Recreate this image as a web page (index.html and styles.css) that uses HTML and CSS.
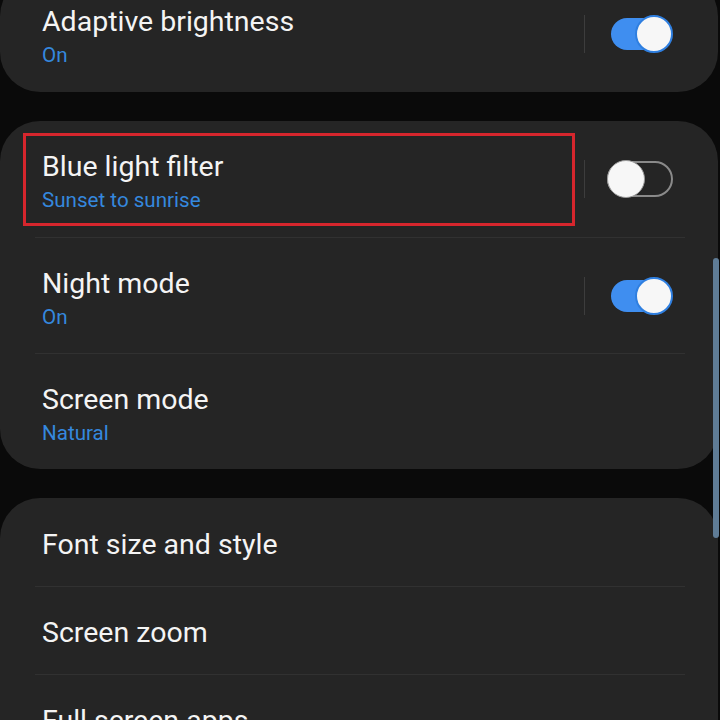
FILE: index.html
```html
<!DOCTYPE html>
<html lang="en">
<head>
  <meta charset="UTF-8">
  <meta name="viewport" content="width=device-width, initial-scale=1.0">
  <title>Display</title>
  <link rel="stylesheet" href="styles.css">
</head>
<body>
  <div class="screen">
    <section class="group">
      <div class="row">
        <div class="row-text">
          <div class="row-title">Adaptive brightness</div>
          <div class="row-summary">On</div>
        </div>
        <div class="row-switch">
          <span class="switch-divider"></span>
          <span class="switch on"><span class="thumb"></span></span>
        </div>
      </div>
    </section>

    <section class="group">
      <div class="row">
        <span class="highlight"></span>
        <div class="row-text">
          <div class="row-title">Blue light filter</div>
          <div class="row-summary">Sunset to sunrise</div>
        </div>
        <div class="row-switch">
          <span class="switch-divider"></span>
          <span class="switch"><span class="thumb"></span></span>
        </div>
      </div>
      <div class="row">
        <div class="row-text">
          <div class="row-title">Night mode</div>
          <div class="row-summary">On</div>
        </div>
        <div class="row-switch">
          <span class="switch-divider"></span>
          <span class="switch on"><span class="thumb"></span></span>
        </div>
      </div>
      <div class="row">
        <div class="row-text">
          <div class="row-title">Screen mode</div>
          <div class="row-summary">Natural</div>
        </div>
      </div>
    </section>

    <section class="group">
      <div class="row short">
        <div class="row-text">
          <div class="row-title">Font size and style</div>
        </div>
      </div>
      <div class="row short">
        <div class="row-text">
          <div class="row-title">Screen zoom</div>
        </div>
      </div>
      <div class="row short">
        <div class="row-text">
          <div class="row-title">Full screen apps</div>
        </div>
      </div>
    </section>

    <div class="scrollbar"></div>
  </div>
</body>
</html>
```

FILE: styles.css
```css
:root {
  --bg: #0a0a0a;
  --card: #252525;
  --line: #313131;
  --text: #f4f4f4;
  --accent: #3588de;
  --switch-on: #3f8ef0;
}

* {
  margin: 0;
  padding: 0;
  box-sizing: border-box;
}

html, body {
  background: var(--bg);
  height: 100%;
  overflow: hidden;
}

body {
  font-family: Roboto, "Noto Sans", sans-serif;
  color: var(--text);
}

.screen {
  position: relative;
  width: 720px;
  height: 744px;
  margin-top: -24px;
  display: flex;
  flex-direction: column;
  gap: 29px;
}

.group {
  background: var(--card);
  border-radius: 40px;
  margin-right: 2px;
  flex-shrink: 0;
}

.row {
  position: relative;
  display: flex;
  align-items: center;
  height: 116px;
  margin: 0 33px 0 35px;
  padding: 0 12px 0 7px;
}

.row.short {
  height: 88px;
}

.row + .row {
  border-top: 1px solid var(--line);
}

.row-text {
  flex: 1;
  display: flex;
  flex-direction: column;
  gap: 3px;
  padding-top: 5px;
}

.row-title {
  font-size: 28.5px;
  line-height: 34px;
}

.row-summary {
  font-size: 20.6px;
  line-height: 26px;
  color: var(--accent);
}

.row-switch {
  display: flex;
  align-items: center;
  gap: 22px;
}

.switch-divider {
  width: 1px;
  height: 38px;
  background: #3d3d3d;
}

.switch {
  position: relative;
  width: 66px;
  height: 36px;
  border: 2px solid #8a8a8a;
  border-radius: 18px;
}

.switch .thumb {
  position: absolute;
  top: -3px;
  left: -2px;
  width: 38px;
  height: 38px;
  border-radius: 50%;
  background: #f7f7f7;
  border: 1px solid #9a9a9a;
}

.switch.on {
  height: 32px;
  width: 60px;
  margin-left: 4px;
  margin-right: 2px;
  border: none;
  background: var(--switch-on);
}

.switch.on .thumb {
  top: -3px;
  left: auto;
  right: -2px;
  border: 2px solid #2f7fe0;
}

/* annotation frame around the first row */
.highlight {
  position: absolute;
  left: -12px;
  top: 12px;
  width: 552px;
  height: 93px;
  border: 3px solid #d6262d;
}

.scrollbar {
  position: absolute;
  right: 1px;
  top: 282px;
  width: 6px;
  height: 280px;
  border-radius: 3px;
  background: #5f7c96;
}
```
